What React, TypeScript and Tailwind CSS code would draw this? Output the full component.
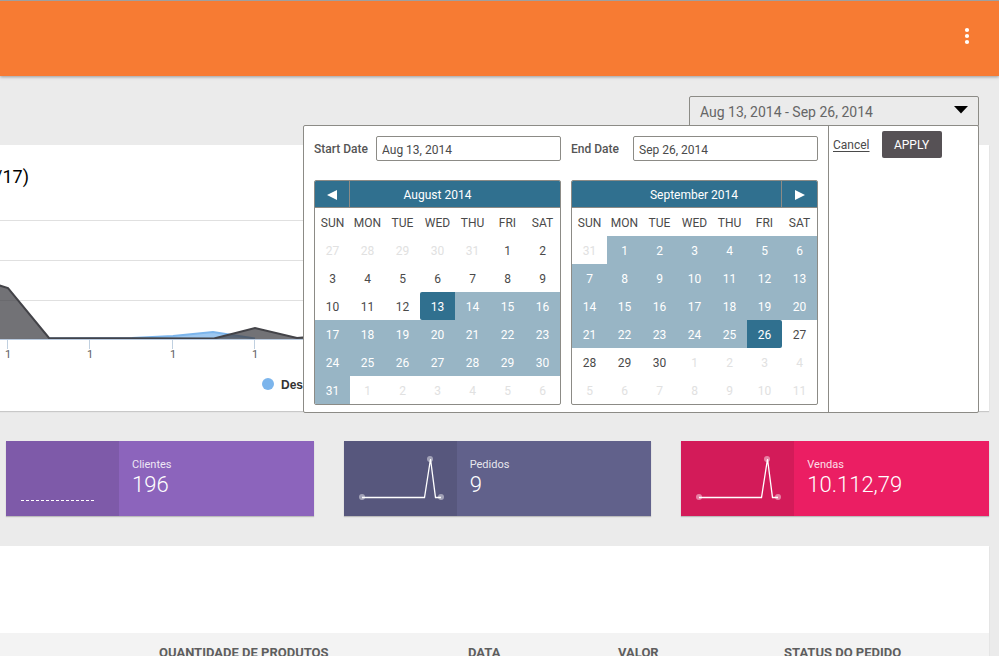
import React from "react";

type Day = { day: number; kind: "out" | "plain" | "range" | "start" | "end" };

const WEEKDAYS = ["SUN", "MON", "TUE", "WED", "THU", "FRI", "SAT"];

const DAY_STYLES: Record<Day["kind"], string> = {
  out: "text-[#e1e1e1]",
  plain: "text-[#4a4a4a]",
  range: "bg-[#98b5c5] text-white",
  start: "rounded-l-xs bg-[#30708f] text-white",
  end: "rounded-r-xs bg-[#30708f] text-white",
};

function buildMonth(
  lead: number[],
  length: number,
  kindOf: (day: number) => Day["kind"],
): Day[][] {
  const days: Day[] = lead.map((day) => ({ day, kind: "out" }));
  for (let day = 1; day <= length; day++) days.push({ day, kind: kindOf(day) });
  for (let day = 1; days.length < 42; day++) days.push({ day, kind: "out" });
  return [0, 1, 2, 3, 4, 5].map((w) => days.slice(w * 7, w * 7 + 7));
}

const AUGUST = buildMonth([27, 28, 29, 30, 31], 31, (d) =>
  d < 13 ? "plain" : d === 13 ? "start" : "range",
);
const SEPTEMBER = buildMonth([31], 30, (d) =>
  d < 26 ? "range" : d === 26 ? "end" : "plain",
);

function Calendar({ title, weeks, nav }: { title: string; weeks: Day[][]; nav: "prev" | "next" }) {
  return (
    <div className="overflow-hidden rounded-xs border border-[#8c8b86]">
      <div className="flex h-[27px] items-stretch border-b border-[#8c8b86] bg-[#30708f] text-white">
        {nav === "prev" && (
          <button aria-label="Previous month" className="flex w-[35px] items-center justify-center border-r border-[#8c8b86] pt-0.5">
            <svg width="10" height="10" viewBox="0 0 10 10" fill="currentColor">
              <path d="M10 0v10L0 5z" />
            </svg>
          </button>
        )}
        <div className={nav === "prev" ? "flex flex-1 items-center justify-center pt-0.5 pr-[35px]" : "flex flex-1 items-center justify-center pt-0.5 pl-[35px]"}>
          {title}
        </div>
        {nav === "next" && (
          <button aria-label="Next month" className="flex w-9 items-center justify-center border-l border-[#8c8b86] pt-0.5">
            <svg width="10" height="10" viewBox="0 0 10 10" fill="currentColor">
              <path d="M0 0v10l10-5z" />
            </svg>
          </button>
        )}
      </div>
      <table className="w-full table-fixed border-collapse text-center">
        <thead>
          <tr>
            {WEEKDAYS.map((d) => (
              <th key={d} className="h-7 p-0 pt-0.5 font-normal text-[#4a4a4a]">{d}</th>
            ))}
          </tr>
        </thead>
        <tbody>
          {weeks.map((week, i) => (
            <tr key={i}>
              {week.map(({ day, kind }, j) => (
                <td key={j} className={`h-7 p-0 pt-0.5 ${DAY_STYLES[kind]}`}>{day}</td>
              ))}
            </tr>
          ))}
        </tbody>
      </table>
    </div>
  );
}

function DateField({ id, label, value }: { id: string; label: string; value: string }) {
  return (
    <div className="flex h-[25px] items-center">
      <label htmlFor={id} className="w-[62px] shrink-0 font-medium text-[#555]">{label}</label>
      <input
        id={id}
        defaultValue={value}
        className="h-full w-full min-w-0 rounded-xs border border-[#8c8b86] bg-white px-[5px] pt-0.5 text-[#4a4a4a] outline-none"
      />
    </div>
  );
}

function RangePicker() {
  return (
    <div className="relative z-10 w-[290px]">
      <button className="flex h-[30px] w-full items-center justify-between rounded-t-xs border border-[#8c8b86] px-2.5 pt-0.5 text-sm text-[#666]">
        Aug 13, 2014 - Sep 26, 2014
        <svg width="14" height="8" viewBox="0 0 14 8" fill="black" className="-mt-1">
          <path d="M0 0h14L7 7.5z" />
        </svg>
      </button>
      <div className="absolute top-[29px] right-0 flex w-max rounded-xs border border-[#8c8b86] bg-white text-xs">
        <div className="flex gap-2.5 border-r border-[#8c8b86] px-2.5 pt-2.5 pb-[7px]">
          <div className="flex w-[247px] flex-col gap-[19px]">
            <DateField id="start" label="Start Date" value="Aug 13, 2014" />
            <Calendar title="August 2014" weeks={AUGUST} nav="prev" />
          </div>
          <div className="flex w-[247px] flex-col gap-[19px]">
            <DateField id="end" label="End Date" value="Sep 26, 2014" />
            <Calendar title="September 2014" weeks={SEPTEMBER} nav="next" />
          </div>
        </div>
        <div className="flex w-[149px] items-start gap-3 pt-[5px] pl-1">
          <a href="#cancel" className="pt-1.5 text-[#4a4a4a] underline underline-offset-2">Cancel</a>
          <button className="h-[27px] w-[60px] rounded-xs bg-[#565155] text-white">APPLY</button>
        </div>
      </div>
    </div>
  );
}

function TrafficChart() {
  return (
    <svg className="block h-[200px] w-full" role="img" aria-label="Area chart">
      {[19, 59, 99].map((y) => (
        <line key={y} x1="0" x2="100%" y1={y + 0.5} y2={y + 0.5} stroke="#e0e0e0" />
      ))}
      <path d="M0 137.5 L132 137 L173 135 L213 131 L255 137.5z" fill="#7cb5ec" fillOpacity="0.75" />
      <path d="M49 137.5 L132 137 L173 135 L213 131 L255 137.5" fill="none" stroke="#7cb5ec" strokeWidth="2" />
      <path d="M-2 84 L8 87 L49 137 L214 137.5 L255 127 L297 137 L320 135 V138 H-2z" fill="#434348" fillOpacity="0.75" />
      <path d="M-2 84 L8 87 L49 137 L214 137.5 L255 127 L297 137 L320 135" fill="none" stroke="#434348" strokeWidth="2" />
      <line x1="0" x2="100%" y1="138.5" y2="138.5" stroke="#b9cadf" />
      {[7, 89, 172, 254].map((x) => (
        <g key={x}>
          <line x1={x + 0.5} x2={x + 0.5} y1="139" y2="148" stroke="#c0d0e0" />
          <text x={x + 1} y="157" textAnchor="middle" fontSize="11" fill="#606060">1</text>
        </g>
      ))}
      <circle cx="268" cy="183" r="6" fill="#7cb5ec" />
      <text x="281" y="188" fontSize="12" fontWeight="bold" fill="#333" fontFamily="Liberation Sans, Arial, sans-serif">Des</text>
    </svg>
  );
}

function Spark({ dotted }: { dotted?: boolean }) {
  return (
    <svg width="113" height="75" viewBox="0 0 113 75" fill="none" stroke="white">
      {dotted ? (
        <line x1="15" x2="89" y1="59.5" y2="59.5" strokeDasharray="3 2" />
      ) : (
        <>
          <g fill="white" fillOpacity="0.45" stroke="none">
            <circle cx="18" cy="56" r="3" />
            <circle cx="86" cy="18" r="3" />
            <circle cx="97" cy="56" r="3" />
          </g>
          <path d="M18 56.5H80.5L86.5 18L91.5 56.5H97" strokeWidth="1.3" />
        </>
      )}
    </svg>
  );
}

function Stat({ label, value, tone, shade, dotted }: { label: string; value: string; tone: string; shade: string; dotted?: boolean }) {
  return (
    <section className={`flex h-[75px] shadow-[0_1px_1px_rgba(0,0,0,0.2)] ${tone}`}>
      <div className={`w-[113px] shrink-0 ${shade}`}>
        <Spark dotted={dotted} />
      </div>
      <div className="pt-[17px] pl-[13px] text-white">
        <div className="text-[11px] leading-[14px] opacity-85">{label}</div>
        <div className="text-[22px] leading-[26px] font-light">{value}</div>
      </div>
    </section>
  );
}

export default function App() {
  return (
    <div className="h-screen overflow-hidden bg-[#ebebeb] font-[Roboto,'Liberation_Sans',sans-serif]">
      <header className="flex h-[76px] items-center justify-end border-t border-[#9f9f9f] bg-[#f77b33] pr-[29px] shadow-[0_1px_3px_rgba(0,0,0,0.35)]">
        <button aria-label="More options" className="-mt-1.5 p-0">
          <svg width="6" height="18" viewBox="0 0 6 18" fill="white" className="block">
            <circle cx="3" cy="3" r="2.1" />
            <circle cx="3" cy="9" r="2.1" />
            <circle cx="3" cy="15" r="2.1" />
          </svg>
        </button>
      </header>
      <div className="flex justify-end pt-5 pr-5">
        <RangePicker />
      </div>
      <main className="flex flex-col gap-[30px] pt-[19px] pr-2.5">
        <section className="h-[266px] bg-white pt-5 pr-5 shadow-[0_1px_1px_rgba(0,0,0,0.15)]">
          <h2 className="-ml-[5px] h-9 text-lg leading-6 text-black">/17)</h2>
          <TrafficChart />
        </section>
        <div className="grid grid-cols-3 gap-[30px] pl-1.5">
          <Stat label="Clientes" value="196" tone="bg-[#8c64bc]" shade="bg-[#7e5aa9]" dotted />
          <Stat label="Pedidos" value="9" tone="bg-[#61618b]" shade="bg-[#57577d]" />
          <Stat label="Vendas" value="10.112,79" tone="bg-[#eb1e63]" shade="bg-[#d31b59]" />
        </div>
        <section className="bg-white pt-[87px] shadow-[0_1px_1px_rgba(0,0,0,0.15)]">
          <table className="w-full table-fixed text-left text-[13px] text-[#5e5e5e]">
            <thead className="bg-[#f3f3f3]">
              <tr className="h-10">
                <td className="w-[159px]" />
                <th className="w-[309px] p-0 font-bold">QUANTIDADE DE PRODUTOS</th>
                <th className="w-[150px] p-0 font-bold">DATA</th>
                <th className="w-[166px] p-0 font-bold">VALOR</th>
                <th className="p-0 font-bold">STATUS DO PEDIDO</th>
              </tr>
            </thead>
          </table>
        </section>
      </main>
    </div>
  );
}
